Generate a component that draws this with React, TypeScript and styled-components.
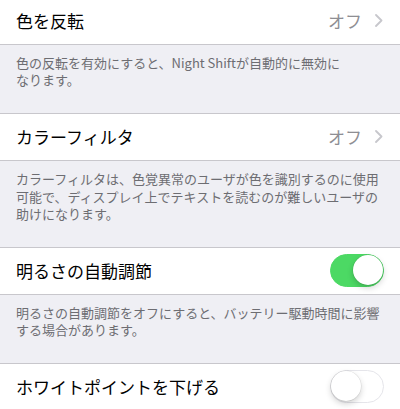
import React from 'react'
import styled, { createGlobalStyle } from 'styled-components'

const GlobalStyle = createGlobalStyle`
  html, body {
    margin: 0;
    padding: 0;
    background: #efeff4;
    font-family: "Noto Sans CJK JP", "Noto Sans", sans-serif;
    -webkit-font-smoothing: antialiased;
  }
`

interface CellProps {
  title: string
  value?: string
  toggle?: boolean
}

const Cell: React.FC<CellProps> = ({ title, value, toggle }) => (
  <Row>
    <Title>{title}</Title>
    {value !== undefined && (
      <Accessory>
        <Value>{value}</Value>
        <Chevron viewBox="0 0 8 13">
          <path d="M1 1l5.5 5.5L1 12" />
        </Chevron>
      </Accessory>
    )}
    {toggle !== undefined && (
      <Switch on={toggle}>
        <Knob on={toggle} />
      </Switch>
    )}
  </Row>
)

const FooterText: React.FC<{ lines: string[] }> = ({ lines }) => (
  <Footer>
    {lines.map((line) => (
      <Line key={line}>{line}</Line>
    ))}
  </Footer>
)

const App: React.FC = () => (
  <>
    <GlobalStyle />
    <Page>
      <Cell title="色を反転" value="オフ" />
      <FooterText lines={['色の反転を有効にすると、Night Shiftが自動的に無効に', 'なります。']} />
      <Cell title="カラーフィルタ" value="オフ" />
      <FooterText
        lines={[
          'カラーフィルタは、色覚異常のユーザが色を識別するのに使用',
          '可能で、ディスプレイ上でテキストを読むのが難しいユーザの',
          '助けになります。',
        ]}
      />
      <Cell title="明るさの自動調節" toggle />
      <FooterText lines={['明るさの自動調節をオフにすると、バッテリー駆動時間に影響', 'する場合があります。']} />
      <Cell title="ホワイトポイントを下げる" toggle={false} />
    </Page>
  </>
)
export default App

const Page = styled.div`
  margin-top: -2px;
  width: 400px;
  height: 411px;
  overflow: hidden;
  background: #efeff4;
`
const Row = styled.div`
  box-sizing: border-box;
  height: 47px;
  display: flex;
  align-items: center;
  justify-content: space-between;
  padding: 0 16px 1px 16px;
  background: #ffffff;
  border-bottom: 1px solid #c8c7cc;
`
const Title = styled.span`
  font-size: 17px;
  color: #000000;
`
const Accessory = styled.div`
  display: flex;
  align-items: center;
  gap: 13px;
  padding-right: 1px;
`
const Value = styled.span`
  font-size: 17px;
  color: #8e8e93;
`
const Chevron = styled.svg`
  width: 8px;
  height: 13px;
  fill: none;
  stroke: #c7c7cc;
  stroke-width: 1.8;
  stroke-linecap: round;
  stroke-linejoin: round;
`
const Switch = styled.div<{ on: boolean }>`
  box-sizing: border-box;
  position: relative;
  width: 54px;
  height: 33px;
  border-radius: 17px;
  background: ${({ on }) => (on ? '#4cd964' : '#ffffff')};
  border: 1.5px solid ${({ on }) => (on ? '#4cd964' : '#e5e5ea')};
`
const Knob = styled.div<{ on: boolean }>`
  position: absolute;
  top: 0;
  ${({ on }) => (on ? 'right: 0;' : 'left: 0;')}
  width: 30px;
  height: 30px;
  border-radius: 50%;
  background: #ffffff;
  box-shadow: 0 3px 6px rgba(0, 0, 0, 0.18), 0 0 0 0.5px rgba(0, 0, 0, 0.1);
`
const Footer = styled.div`
  box-sizing: border-box;
  padding: 9px 8px 25px 16px;
  font-size: 13px;
  line-height: 17.2px;
  color: #6d6d72;
  border-bottom: 1px solid #c8c7cc;
`
const Line = styled.div`
  white-space: nowrap;
  height: 17.2px;
`
